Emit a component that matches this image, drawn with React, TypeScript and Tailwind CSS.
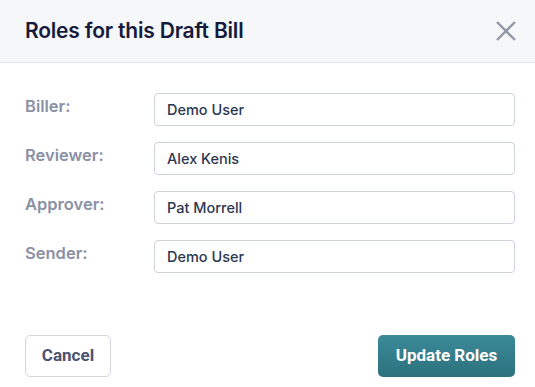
import { useState } from "react"

const roles = [
    { label: "Biller:", value: "Demo User" },
    { label: "Reviewer:", value: "Alex Kenis" },
    { label: "Approver:", value: "Pat Morrell" },
    { label: "Sender:", value: "Demo User" },
]

export default function App() {
    const [values, setValues] = useState(roles.map((r) => r.value))

    return (
        <div className="w-[535px] h-[387px] bg-white flex flex-col font-['Inter',sans-serif]">
            {/* Header */}
            <div className="h-[63px] shrink-0 bg-[#f6f7f9] border-b border-[#e3e6ea] flex items-center justify-between pl-[25px] pr-[17px]">
                <h2 className="text-[21px] font-semibold text-[#161b3c] tracking-[-0.2px]">Roles for this Draft Bill</h2>
                <button className="w-[24px] h-[24px] flex items-center justify-center">
                    <svg width="22" height="22" viewBox="0 0 22 22" fill="none" stroke="#9198a6" strokeWidth="2.4" strokeLinecap="butt">
                        <path d="M2 2 L20 20 M20 2 L2 20" />
                    </svg>
                </button>
            </div>

            {/* Fields */}
            <div className="flex flex-col gap-[16px] pt-[30px] pl-[25px] pr-[20px]">
                {roles.map((r, i) => (
                    <div key={r.label} className="flex items-start">
                        <label className="w-[129px] pt-[3px] text-[16.5px] leading-[20px] font-semibold text-[#8b91a5]">{r.label}</label>
                        <input
                            value={values[i]}
                            onChange={(e) => setValues(values.map((v, j) => (j === i ? e.target.value : v)))}
                            className="flex-1 h-[33px] px-[12px] border border-[#cdd1da] rounded-[4px] text-[14.5px] font-medium text-[#2c374f] outline-none"
                        />
                    </div>
                ))}
            </div>

            {/* Footer */}
            <div className="mt-auto flex items-center justify-between pr-[20px] pb-[10px] pl-[25px] font-['Roboto',sans-serif]">
                <button className="w-[86px] h-[42px] border border-[#d3d6de] rounded-[5px] bg-white text-[17px] font-bold text-[#4b5271]">
                    Cancel
                </button>
                <button className="w-[137px] h-[42px] rounded-[5px] bg-gradient-to-b from-[#3b8a98] to-[#2d717e] text-[17px] font-bold text-white">
                    Update Roles
                </button>
            </div>
        </div>
    )
}
